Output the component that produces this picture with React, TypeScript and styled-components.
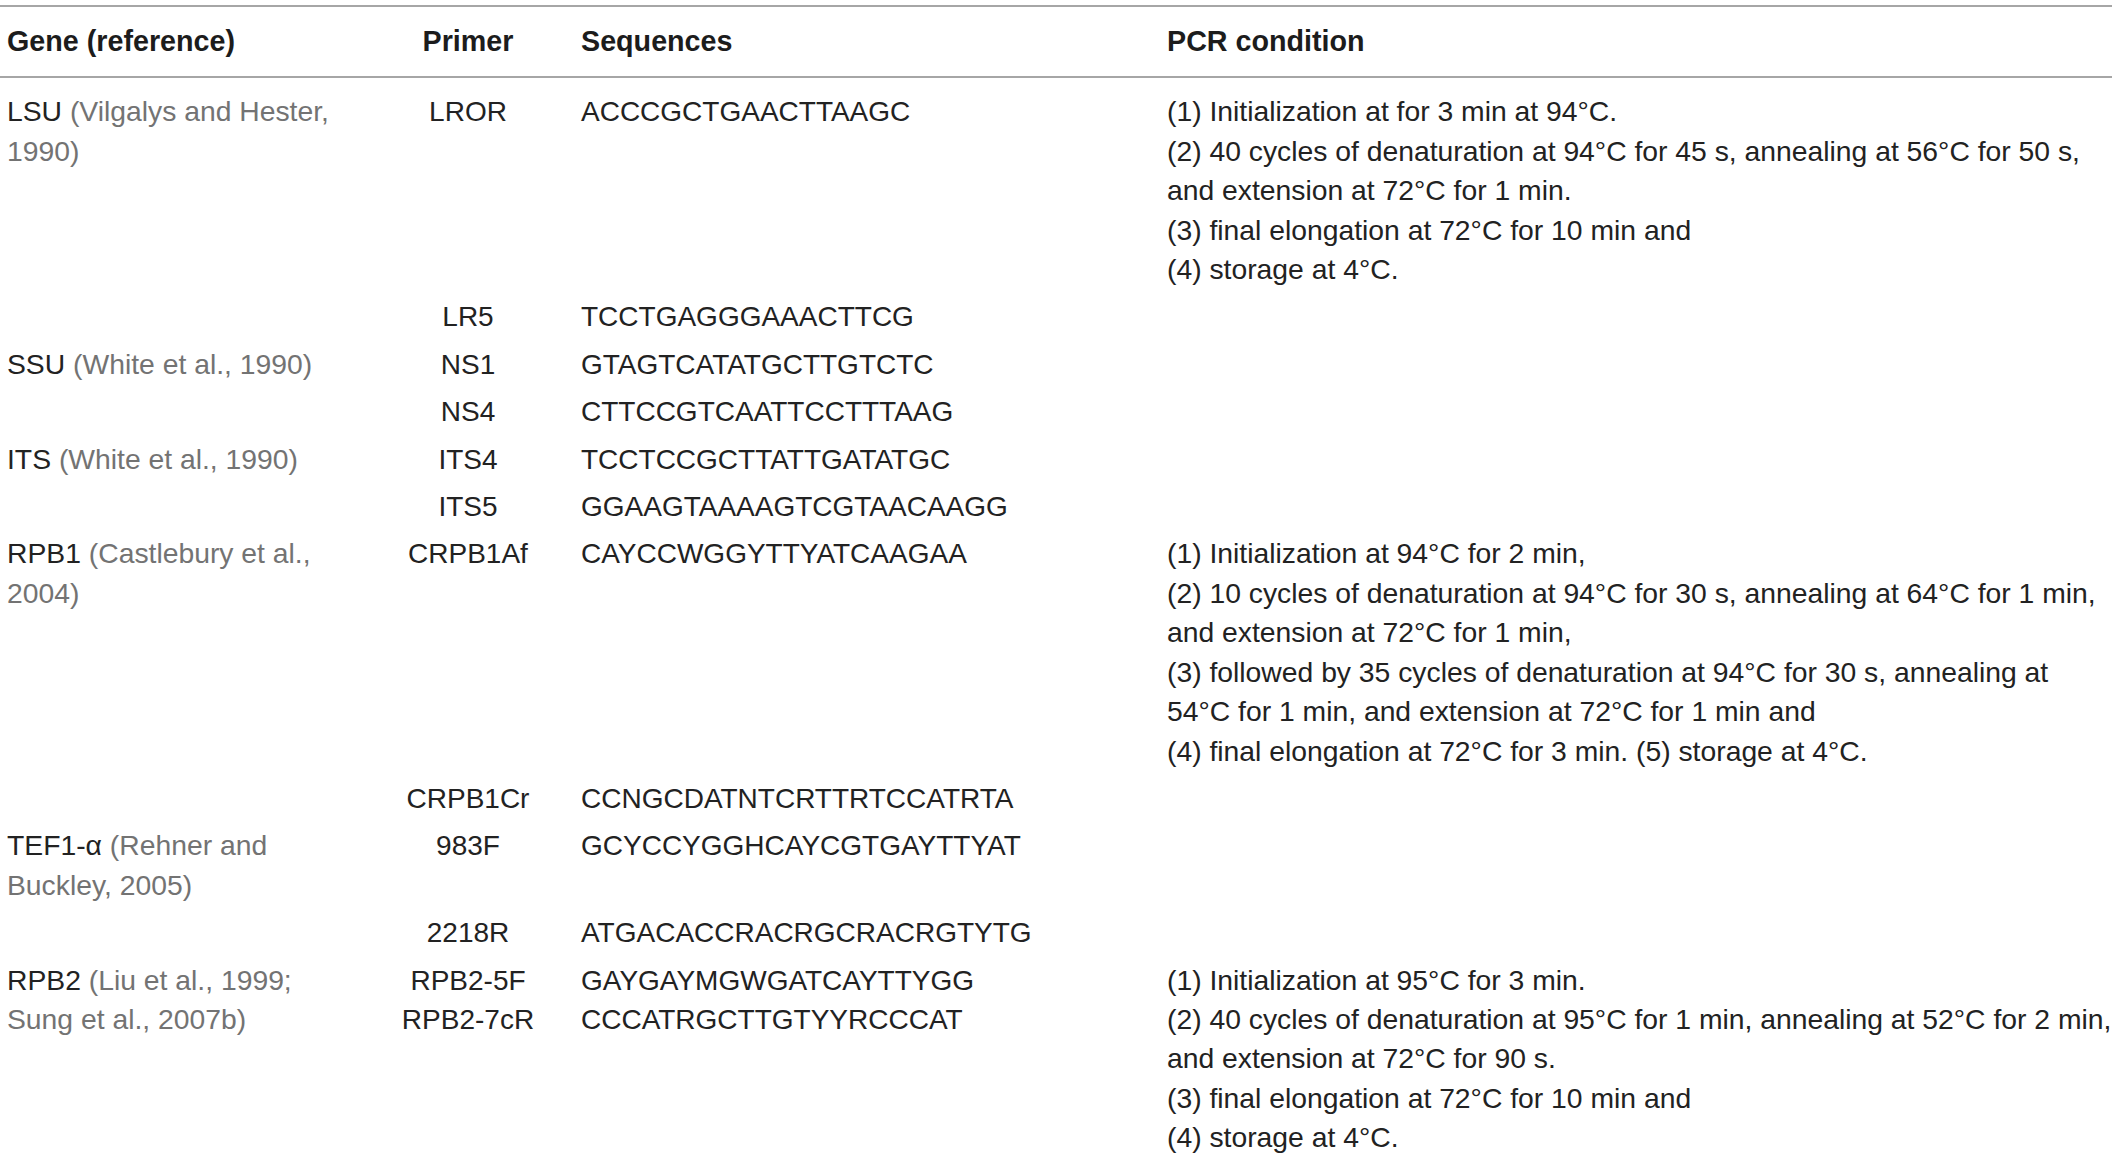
import styled, { createGlobalStyle } from 'styled-components';

type Gene = { name: string; cite: string[] };

type RowData = {
  gene?: Gene;
  primers: string[];
  sequences: string[];
  pcr?: string[];
};

const rows: RowData[] = [
  {
    gene: { name: 'LSU', cite: ['(Vilgalys and Hester,', '1990)'] },
    primers: ['LROR'],
    sequences: ['ACCCGCTGAACTTAAGC'],
    pcr: [
      '(1) Initialization at for 3 min at 94°C.',
      '(2) 40 cycles of denaturation at 94°C for 45 s, annealing at 56°C for 50 s,',
      'and extension at 72°C for 1 min.',
      '(3) final elongation at 72°C for 10 min and',
      '(4) storage at 4°C.',
    ],
  },
  { primers: ['LR5'], sequences: ['TCCTGAGGGAAACTTCG'] },
  {
    gene: { name: 'SSU', cite: ['(White et al., 1990)'] },
    primers: ['NS1'],
    sequences: ['GTAGTCATATGCTTGTCTC'],
  },
  { primers: ['NS4'], sequences: ['CTTCCGTCAATTCCTTTAAG'] },
  {
    gene: { name: 'ITS', cite: ['(White et al., 1990)'] },
    primers: ['ITS4'],
    sequences: ['TCCTCCGCTTATTGATATGC'],
  },
  { primers: ['ITS5'], sequences: ['GGAAGTAAAAGTCGTAACAAGG'] },
  {
    gene: { name: 'RPB1', cite: ['(Castlebury et al.,', '2004)'] },
    primers: ['CRPB1Af'],
    sequences: ['CAYCCWGGYTTYATCAAGAA'],
    pcr: [
      '(1) Initialization at 94°C for 2 min,',
      '(2) 10 cycles of denaturation at 94°C for 30 s, annealing at 64°C for 1 min,',
      'and extension at 72°C for 1 min,',
      '(3) followed by 35 cycles of denaturation at 94°C for 30 s, annealing at',
      '54°C for 1 min, and extension at 72°C for 1 min and',
      '(4) final elongation at 72°C for 3 min. (5) storage at 4°C.',
    ],
  },
  { primers: ['CRPB1Cr'], sequences: ['CCNGCDATNTCRTTRTCCATRTA'] },
  {
    gene: { name: 'TEF1-α', cite: ['(Rehner and', 'Buckley, 2005)'] },
    primers: ['983F'],
    sequences: ['GCYCCYGGHCAYCGTGAYTTYAT'],
  },
  { primers: ['2218R'], sequences: ['ATGACACCRACRGCRACRGTYTG'] },
  {
    gene: { name: 'RPB2', cite: ['(Liu et al., 1999;', 'Sung et al., 2007b)'] },
    primers: ['RPB2-5F', 'RPB2-7cR'],
    sequences: ['GAYGAYMGWGATCAYTTYGG', 'CCCATRGCTTGTYYRCCCAT'],
    pcr: [
      '(1) Initialization at 95°C for 3 min.',
      '(2) 40 cycles of denaturation at 95°C for 1 min, annealing at 52°C for 2 min,',
      'and extension at 72°C for 90 s.',
      '(3) final elongation at 72°C for 10 min and',
      '(4) storage at 4°C.',
    ],
  },
];

const GeneCell = ({ gene }: { gene?: Gene }) => {
  if (!gene) return <Cell $col="gene" />;
  return (
    <Cell $col="gene">
      {gene.cite.map((line, i) => (
        <Line key={i}>
          {i === 0 && <>{gene.name} </>}
          <Cite>{line}</Cite>
        </Line>
      ))}
    </Cell>
  );
};

const App = () => {
  return (
    <>
      <GlobalStyle />
      <Page>
        <Table>
          <HeadRow>
            <HeadCell $col="gene">Gene (reference)</HeadCell>
            <HeadCell $col="primer">Primer</HeadCell>
            <HeadCell $col="seq">Sequences</HeadCell>
            <HeadCell $col="pcr">PCR condition</HeadCell>
          </HeadRow>
          <Body>
            {rows.map((row, i) => (
              <Row key={i}>
                <GeneCell gene={row.gene} />
                <Cell $col="primer">
                  {row.primers.map(p => (
                    <Line key={p}>{p}</Line>
                  ))}
                </Cell>
                <Cell $col="seq">
                  {row.sequences.map(s => (
                    <Line key={s}>{s}</Line>
                  ))}
                </Cell>
                <Cell $col="pcr">
                  {row.pcr?.map((l, j) => (
                    <Line key={j}>{l}</Line>
                  ))}
                </Cell>
              </Row>
            ))}
          </Body>
        </Table>
      </Page>
    </>
  );
};

export default App;

type Col = 'gene' | 'primer' | 'seq' | 'pcr';

const colPadding: Record<Col, string> = {
  gene: '0 0 0 7px',
  primer: '0',
  seq: '0 0 0 35px',
  pcr: '0 0 0 35px',
};

const GlobalStyle = createGlobalStyle`
  html, body {
    margin: 0;
    padding: 0;
    background: #ffffff;
  }
  body {
    font-family: "Liberation Sans", Arial, sans-serif;
    color: #222222;
  }
`;

const Page = styled.div`
  padding-top: 5px;
  width: 2118px;
  height: 1159px;
  overflow: hidden;
`;

const Table = styled.div`
  width: 2112px;
  border-top: 2px solid #a6a6a6;
`;

const grid = `
  display: grid;
  grid-template-columns: 390px 156px 586px 1fr;
`;

const HeadRow = styled.div`
  ${grid}
  padding: 15px 0;
  border-bottom: 2px solid #a6a6a6;
`;

const HeadCell = styled.div<{ $col: Col }>`
  font-size: 28.7px;
  line-height: 39.4px;
  font-weight: 700;
  color: #1c1c1c;
  white-space: nowrap;
  padding: ${({ $col }) => colPadding[$col]};
  text-align: ${({ $col }) => ($col === 'primer' ? 'center' : 'left')};
`;

const Body = styled.div`
  padding-top: 10px;
`;

const Row = styled.div`
  ${grid}
  padding: 4px 0;
`;

const Cell = styled.div<{ $col: Col }>`
  font-size: ${({ $col }) => ($col === 'pcr' || $col === 'gene' ? '28.3px' : '28px')};
  line-height: 39.4px;
  padding: ${({ $col }) => colPadding[$col]};
  text-align: ${({ $col }) => ($col === 'primer' ? 'center' : 'left')};
`;

const Line = styled.div`
  white-space: nowrap;
`;

const Cite = styled.span`
  color: #737373;
`;
